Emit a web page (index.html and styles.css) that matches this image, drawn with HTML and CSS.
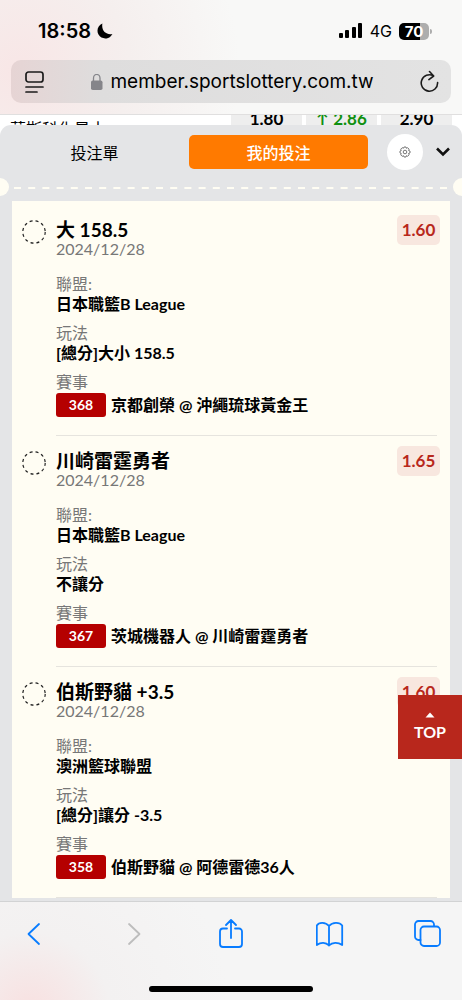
FILE: index.html
```html
<!DOCTYPE html>
<html lang="zh-Hant">
<head>
<meta charset="utf-8">
<meta name="viewport" content="width=device-width, initial-scale=1">
<title>我的投注</title>
<link rel="stylesheet" href="styles.css">
</head>
<body>
<header class="browser-top">
  <div class="status">
    <div class="status-left">
      <time>18:58</time>
      <svg width="16" height="16" viewBox="0 0 16 16" aria-hidden="true"><path d="M5.400.6C.9 2.500-.8 7.600 1.500 11.600c2.500 4.300 8.400 5.200 12 1.800.8-.7 1.400-1.500 1.900-2.500C9.700 12.400 4 8 5.400.6z"/></svg>
    </div>
    <div class="status-right">
      <svg width="24" height="16" viewBox="0 0 24 16" aria-hidden="true"><rect x="0" y="10" width="4" height="5" rx="1"/><rect x="6" y="7" width="4" height="8" rx="1"/><rect x="13" y="4" width="4" height="11" rx="1"/><rect x="19" y="0" width="4" height="15" rx="1"/></svg>
      <span class="network">4G</span>
      <span class="battery">70</span>
    </div>
  </div>
  <div class="address">
    <button class="plain" aria-label="頁面設定"><svg width="20" height="24" viewBox="0 0 20 24" fill="none" stroke="#1b1b1b" stroke-width="1.700" stroke-linecap="round"><rect x="1" y="2" width="17" height="10" rx="2.500"/><path d="M1 17h17M1 22h11"/></svg></button>
    <button class="plain url"><svg width="12" height="16" viewBox="0 0 12 16" aria-hidden="true"><rect x="0" y="6.500" width="11.500" height="9.500" rx="1.800" fill="#85858a"/><path d="M2.500 7V4.200a3.200 3.700 0 0 1 6.500 0V7" fill="none" stroke="#85858a" stroke-width="1.300"/></svg><span>member.sportslottery.com.tw</span></button>
    <button class="plain" aria-label="重新載入"><svg width="20" height="24" viewBox="0 0 20 24" fill="none" stroke="#1b1b1b" stroke-width="1.600" stroke-linecap="round" stroke-linejoin="round"><path d="M17.600 12.500a8.200 8.200 0 1 1-4.200-6.700M9.500 1.500l4.200 4.500-4.800 3.600"/></svg></button>
  </div>
</header>
<main class="page">
  <div class="match">
    <span class="team">華斯科化星士</span>
    <span class="price">1.80</span>
    <span class="price up">↑ 2.86</span>
    <span class="price">2.90</span>
  </div>
  <section class="panel">
    <nav class="tabs">
      <button class="tab">投注單</button>
      <button class="tab active">我的投注</button>
      <button class="gear" aria-label="設定"><svg width="12" height="12" viewBox="0 0 12 12" fill="none" stroke="#555" stroke-width=".8" stroke-linejoin="round"><path d="M5 1h2l.4 1.300 1.200-.6 1.500 1.500-.6 1.200L11 5v2l-1.500.5.6 1.300-1.500 1.500-1.200-.6L7 11H5l-.5-1.300-1.300.6-1.500-1.500.6-1.200L1 7V5l1.300-.5-.6-1.300 1.500-1.500 1.200.6z"/><circle cx="6" cy="6" r="1.800"/></svg></button>
      <button class="plain" aria-label="收合"><svg width="14" height="10" viewBox="0 0 14 10" fill="none" stroke="#111" stroke-width="2.600"><path d="M1 1.500l6 6 6-6"/></svg></button>
    </nav>
    <div class="tear"><svg width="100%" height="2" aria-hidden="true"><line x1="0" y1="1" x2="100%" y2="1" stroke="#fffdf3" stroke-width="2" stroke-dasharray="7 7.200"/></svg></div>
    <div class="card">
      <article class="bet">
        <svg class="ring" viewBox="0 0 24 24" aria-hidden="true"><circle cx="12" cy="12" r="11.200"/></svg>
        <div class="details">
          <div class="head"><h2>大 158.5</h2><span class="odds">1.60</span></div>
          <time class="date">2024/12/28</time>
          <dl>
            <dt>聯盟:</dt><dd>日本職籃B League</dd>
            <dt>玩法</dt><dd>[總分]大小 158.5</dd>
            <dt>賽事</dt><dd class="event"><span class="number">368</span>京都創榮 @ 沖繩琉球黃金王</dd>
          </dl>
        </div>
      </article>
      <article class="bet">
        <svg class="ring" viewBox="0 0 24 24" aria-hidden="true"><circle cx="12" cy="12" r="11.200"/></svg>
        <div class="details">
          <div class="head"><h2>川崎雷霆勇者</h2><span class="odds">1.65</span></div>
          <time class="date">2024/12/28</time>
          <dl>
            <dt>聯盟:</dt><dd>日本職籃B League</dd>
            <dt>玩法</dt><dd>不讓分</dd>
            <dt>賽事</dt><dd class="event"><span class="number">367</span>茨城機器人 @ 川崎雷霆勇者</dd>
          </dl>
        </div>
      </article>
      <article class="bet">
        <svg class="ring" viewBox="0 0 24 24" aria-hidden="true"><circle cx="12" cy="12" r="11.200"/></svg>
        <div class="details">
          <div class="head"><h2>伯斯野貓 +3.5</h2><span class="odds">1.60</span></div>
          <time class="date">2024/12/28</time>
          <dl>
            <dt>聯盟:</dt><dd>澳洲籃球聯盟</dd>
            <dt>玩法</dt><dd>[總分]讓分 -3.5</dd>
            <dt>賽事</dt><dd class="event"><span class="number">358</span>伯斯野貓 @ 阿德雷德36人</dd>
          </dl>
        </div>
      </article>
    </div>
    <button class="top"><svg width="10" height="6" viewBox="0 0 10 6" fill="#fff" aria-hidden="true"><path d="M5 .5L9.500 5.500H.5z"/></svg>TOP</button>
  </section>
</main>
<footer class="browser-bottom">
  <nav class="tools">
    <button class="plain" aria-label="上一頁"><svg width="28" height="30" viewBox="0 0 28 30"><path d="M19 5L8.500 15 19 25"/></svg></button>
    <button class="plain" aria-label="下一頁" disabled><svg width="28" height="30" viewBox="0 0 28 30"><path d="M10 5l10.500 10L10 25"/></svg></button>
    <button class="plain" aria-label="分享"><svg width="28" height="30" viewBox="0 0 28 30"><path d="M10 9.500H6a3 3 0 0 0-3 3V25a3 3 0 0 0 3 3h16a3 3 0 0 0 3-3V12.500a3 3 0 0 0-3-3h-4M14 19V1.500M9 6l5-5 5 5"/></svg></button>
    <button class="plain" aria-label="書籤"><svg width="28" height="30" viewBox="0 0 28 30"><path d="M13 7C9.500 3 3 3 .8 6.500V26c4-3 9-3 12.200.5 3.200-3.500 9-3.500 13.200-.5V6.500C23.500 3 16.500 3 13 7zM13 7v19.500"/></svg></button>
    <button class="plain" aria-label="分頁"><svg width="28" height="30" viewBox="0 0 28 30"><path d="M6.500 21H4.500A3.500 3.500 0 0 1 1 17.500V5.500A3.500 3.500 0 0 1 4.500 2h12A3.500 3.500 0 0 1 20 5.500V7"/><rect x="6.500" y="7.500" width="19.500" height="19.500" rx="3.500"/></svg></button>
  </nav>
  <div class="home"></div>
</footer>
</body>
</html>
```
FILE: styles.css
```css
* { box-sizing: border-box; }
body {
  margin: 0;
  min-height: 100vh;
  display: flex;
  flex-direction: column;
  font-family: Lato, "Noto Sans CJK TC", sans-serif;
  font-size: 16px;
  color: #000;
  background: #fff;
}
button { font: inherit; color: inherit; border: 0; padding: 0; }
.plain { background: none; display: flex; align-items: center; justify-content: center; }
svg { display: block; flex: none; }

.browser-top {
  font-family: Inter, sans-serif;
  background: radial-gradient(circle at 20px 70px, #f8e6e6 0, #f5efee 110px, #f8f8f7 220px);
  border-bottom: 1px solid #e0dfdf;
  padding: 16px 11px 11px;
}
.status {
  display: flex;
  justify-content: space-between;
  align-items: center;
  height: 30px;
  padding: 0 22px 0 27px;
}
.status-left { display: flex; align-items: center; gap: 6px; font-size: 20px; font-weight: 600; }
.status-right { display: flex; align-items: center; gap: 7px; }
.network { font-size: 16px; }
.battery {
  position: relative;
  width: 30px;
  line-height: 17px;
  border-radius: 5px;
  text-align: center;
  font-size: 15px;
  font-weight: 700;
  color: #fff;
  background: linear-gradient(90deg, #000 70%, #adadad 70%);
}
.battery::after {
  content: "";
  position: absolute;
  right: -3px;
  top: 6px;
  width: 2px;
  height: 5px;
  border-radius: 0 2px 2px 0;
  background: #adadad;
}
.address {
  display: flex;
  align-items: center;
  justify-content: space-between;
  height: 43px;
  margin-top: 14px;
  padding: 0 11px 0 14px;
  border-radius: 10px;
  background: linear-gradient(90deg, #e6d4d4, #dedddd 90px, #e3e3e3);
}
.url { gap: 7px; font-size: 19px; }

.page { flex: 1; display: flex; flex-direction: column; }
.match {
  display: grid;
  grid-template-columns: 1fr 71px 71px 71px;
  gap: 4px;
  height: 22px;
  margin-bottom: -12px;
  padding: 0 10px;
  overflow: hidden;
}
.team { line-height: 28px; }
.price {
  height: 22px;
  line-height: 8px;
  font-size: 17px;
  font-weight: 700;
  text-align: center;
  background: #eee;
}
.up { color: #109010; }

.panel {
  position: relative;
  flex: 1;
  padding: 0 12px 3px;
  border-radius: 11px 11px 0 0;
  background: #e4e5e7;
}
.tabs {
  display: grid;
  grid-template-columns: 1fr 179px 36px 14px;
  align-items: center;
  column-gap: 16px;
  height: 53px;
  padding-left: 4px;
}
.tab { height: 34px; border-radius: 5px; background: none; font-size: 16px; }
.active { background: #ff7a00; color: #fff; font-weight: 500; }
.gear {
  display: flex;
  align-items: center;
  justify-content: center;
  width: 36px;
  height: 36px;
  margin-left: 3px;
  border-radius: 50%;
  background: #fff;
}
.tear { position: relative; height: 18px; padding: 9px 0 0 2px; }
.tear::before, .tear::after {
  content: "";
  position: absolute;
  top: 0;
  width: 9px;
  height: 18px;
  background: #fffdf3;
}
.tear::before { left: -12px; border-radius: 0 9px 9px 0; }
.tear::after { right: -12px; border-radius: 9px 0 0 9px; }

.card { margin-top: 5px; padding: 4px 13px 0 10px; background: #fffdf3; }
.bet { display: grid; grid-template-columns: 24px 1fr; column-gap: 10px; }
.ring { width: 24px; height: 24px; margin-top: 15px; fill: none; stroke: #222; stroke-width: 1.2; stroke-dasharray: 3 3; }
.details { padding: 14px 0 18px; border-bottom: 1px solid #e6e4de; }
.head { display: flex; justify-content: space-between; align-items: center; height: 22px; margin-right: -3px; }
h2 { margin: 0; font-size: 19px; line-height: 22px; font-weight: 700; }
.odds {
  width: 43px;
  line-height: 30px;
  border-radius: 5px;
  background: #f8e7df;
  color: #b8281c;
  font-size: 17px;
  font-weight: 700;
  text-align: center;
}
.date { display: block; line-height: 16px; color: #777; }
dl { margin: 17px 0 0; }
dt { line-height: 20px; color: #777; }
dd { margin: 0 0 9px; line-height: 20px; font-weight: 700; }
.event { display: flex; align-items: center; gap: 5px; margin: 1px 0 0; line-height: 24px; }
.number { width: 50px; border-radius: 3px; background: #b50000; color: #fff; font-size: 14px; text-align: center; }

.top {
  position: absolute;
  right: 0;
  bottom: 142px;
  width: 64px;
  height: 64px;
  display: flex;
  flex-direction: column;
  align-items: center;
  justify-content: center;
  gap: 4px;
  color: #fff;
  background: #b8271c;
  font-weight: 700;
  line-height: 20px;
}

.browser-bottom {
  border-top: 1px solid #d2d3d4;
  background: radial-gradient(circle at 30px 110px, #f8e0e0 0, #f3f1f1 80px, #f5f5f5 200px);
  padding: 17px 20px 9px;
}
.tools { display: flex; justify-content: space-between; }
.tools svg { fill: none; stroke: #087cff; stroke-width: 1.8; stroke-linejoin: round; stroke-linecap: round; }
.tools button:disabled svg { stroke: #bdbdbd; }
.home { width: 164px; height: 6px; margin: 37px auto 0; border-radius: 3px; background: #000; }
```
